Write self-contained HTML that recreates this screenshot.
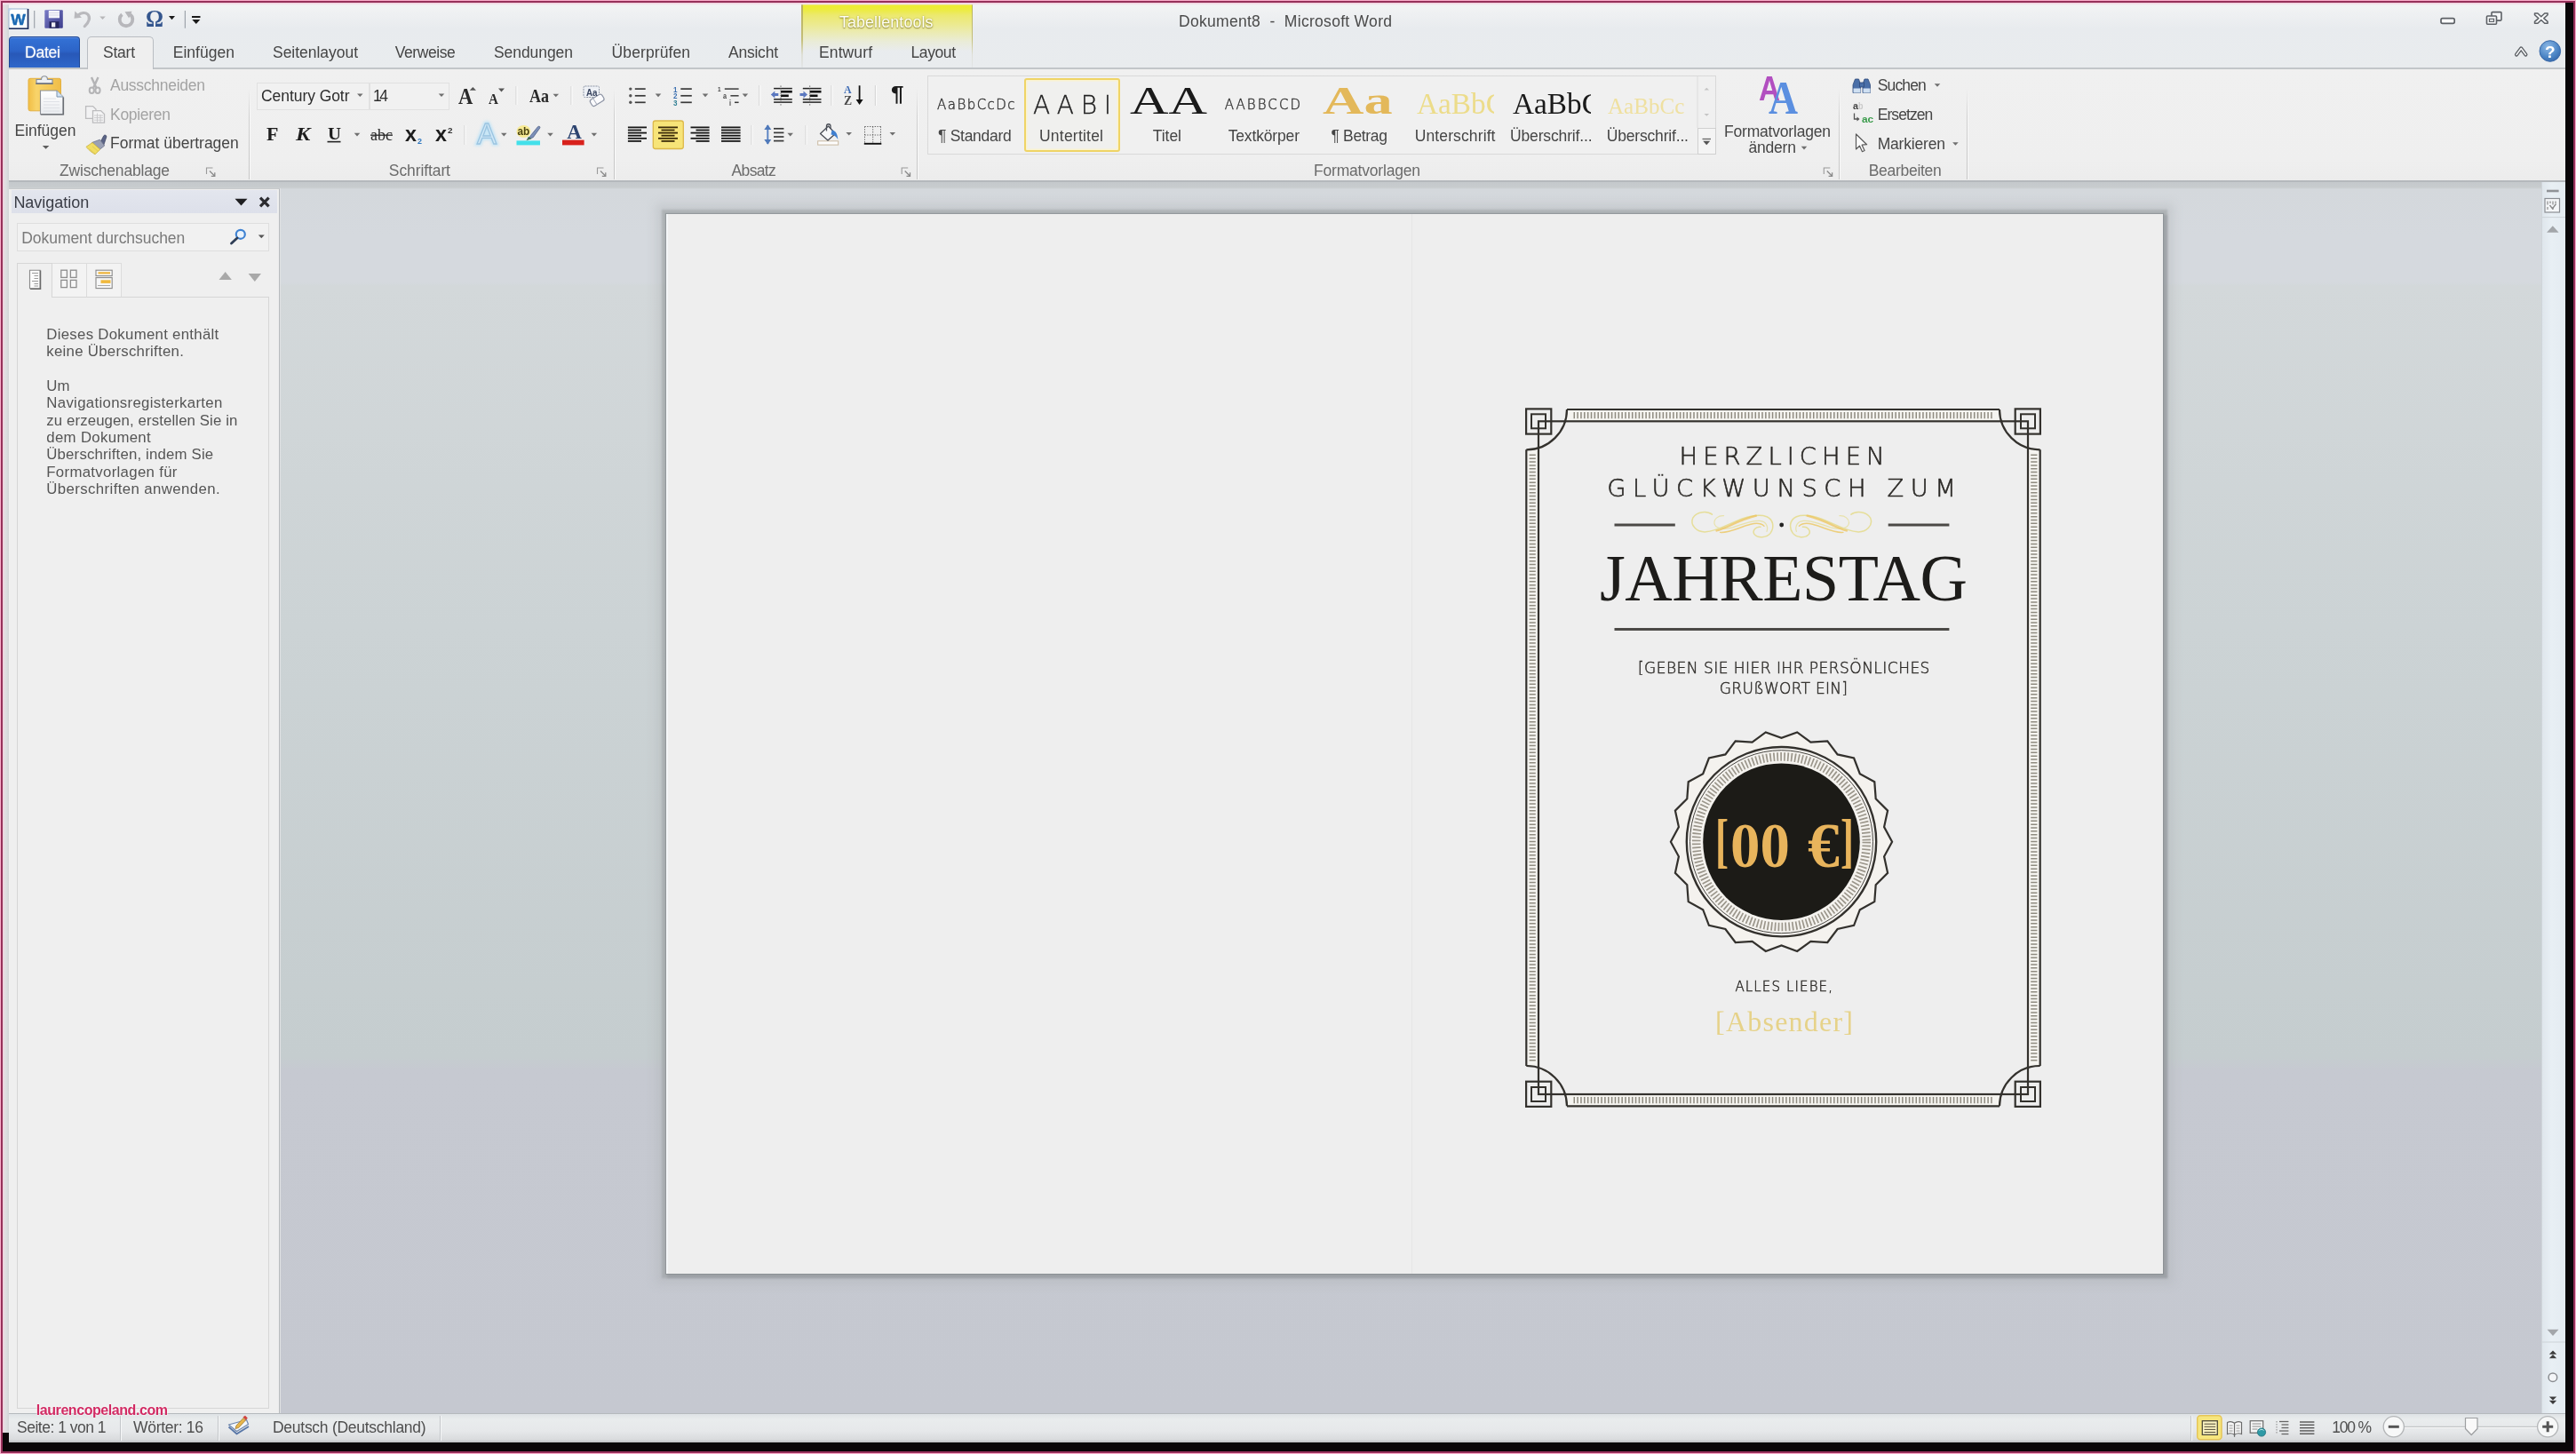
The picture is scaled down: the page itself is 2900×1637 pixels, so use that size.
<!DOCTYPE html>
<html lang="de"><head><meta charset="utf-8"><title>Dokument8 - Microsoft Word</title>
<style>
html,body{margin:0;padding:0;}
body{width:2900px;height:1637px;overflow:hidden;position:relative;background:#f8aecb;font-family:"Liberation Sans",sans-serif;}
div,span.t,svg{position:absolute;box-sizing:border-box;}
span.t{white-space:pre;display:block;}
svg{overflow:visible;}

</style></head><body><div id="app" style="left:0;top:0;width:2900px;height:1637px;will-change:transform;filter:blur(.55px);">
<div style="left:1.2px;top:1.2px;width:2897.4px;height:1634.6px;background:#96305a;"></div>
<div style="left:2.8px;top:2.8px;width:2894.4px;height:1631.4px;background:#0a0608;"></div>
<div style="left:3px;top:3px;width:2885px;height:1621px;background:#e9ecef;"></div>
<div style="left:2.8px;top:2.8px;width:7.2px;height:1621.2px;background:linear-gradient(90deg,#f0c9d8 0,#e6dde2 25%,#dcdee0 55%,#d3d5d7 100%);"></div>
<div style="left:2.8px;top:2.8px;width:2885.2px;height:3.5px;background:linear-gradient(180deg,#f3c4d6 0,#f1e3ea 50%,rgba(243,244,245,0) 100%);z-index:3;"></div>
<div style="left:10px;top:3px;width:2878px;height:74px;background:linear-gradient(180deg,#f3f4f5 0,#e8ebee 40%,#e9ecee 100%);"></div>
<div style="left:902.4px;top:4.7px;width:193px;height:71px;background:linear-gradient(180deg,#ecec40 0,#eeee32 4%,#eceb48 10%,#ece96e 17%,#ecea8e 31%,#ebebb4 45%,rgba(234,236,212,.85) 59%,rgba(233,236,238,0) 74%);"></div>
<div style="left:902.4px;top:4.7px;width:1.3px;height:71px;background:linear-gradient(180deg,#b9b25c 0,#c4be78 55%,rgba(215,215,200,.6) 80%,rgba(220,222,224,.5) 100%);"></div>
<div style="left:1094.2px;top:4.7px;width:1.3px;height:71px;background:linear-gradient(180deg,#b9b25c 0,#c4be78 55%,rgba(215,215,200,.6) 80%,rgba(220,222,224,.5) 100%);"></div>
<span class="t" style="left:945px;top:16.80px;font-family:'Liberation Sans', sans-serif;font-size:17.8px;line-height:17.8px;font-weight:400;color:#fffff6;letter-spacing:0.142px;text-shadow:0 1px 1.5px rgba(110,100,20,.75),0 0 2px rgba(140,130,30,.55);">Tabellentools</span>
<span class="t" style="left:1327px;top:16.00px;font-family:'Liberation Sans', sans-serif;font-size:17.5px;line-height:17.5px;font-weight:400;color:#4a4a4a;letter-spacing:0.292px;">Dokument8  -  Microsoft Word</span>
<div style="left:10px;top:76px;width:2878px;height:1.5px;background:#c2c6c9;"></div>
<div style="left:10px;top:41px;width:80px;height:35px;background:linear-gradient(180deg,#3472d6 0,#2c64c8 45%,#2858b8 55%,#2f68ca 100%);border:1px solid #1d4796;border-bottom:none;border-radius:4px 4px 0 0;box-shadow:inset 0 1px 0 #5d8de0;"></div>
<span class="t" style="left:28px;top:51.00px;font-family:'Liberation Sans', sans-serif;font-size:17.5px;line-height:17.5px;font-weight:400;color:#fff;letter-spacing:-0.215px;text-shadow:0 0 2px rgba(255,255,255,.5);">Datei</span>
<div style="left:98px;top:41px;width:75px;height:37px;background:#efefef;border:1.5px solid #b9bdc2;border-bottom:none;border-radius:5px 5px 0 0;"></div>
<span class="t" style="left:116px;top:51.00px;font-family:'Liberation Sans', sans-serif;font-size:17.5px;line-height:17.5px;font-weight:400;color:#454545;letter-spacing:-0.242px;">Start</span>
<span class="t" style="left:194.7px;top:51.00px;font-family:'Liberation Sans', sans-serif;font-size:17.5px;line-height:17.5px;font-weight:400;color:#454545;letter-spacing:0.029px;">Einfügen</span>
<span class="t" style="left:307px;top:51.00px;font-family:'Liberation Sans', sans-serif;font-size:17.5px;line-height:17.5px;font-weight:400;color:#454545;letter-spacing:-0.030px;">Seitenlayout</span>
<span class="t" style="left:444.8px;top:51.00px;font-family:'Liberation Sans', sans-serif;font-size:17.5px;line-height:17.5px;font-weight:400;color:#454545;letter-spacing:-0.431px;">Verweise</span>
<span class="t" style="left:556px;top:51.00px;font-family:'Liberation Sans', sans-serif;font-size:17.5px;line-height:17.5px;font-weight:400;color:#454545;letter-spacing:-0.068px;">Sendungen</span>
<span class="t" style="left:688.6px;top:51.00px;font-family:'Liberation Sans', sans-serif;font-size:17.5px;line-height:17.5px;font-weight:400;color:#454545;letter-spacing:0.093px;">Überprüfen</span>
<span class="t" style="left:820px;top:51.00px;font-family:'Liberation Sans', sans-serif;font-size:17.5px;line-height:17.5px;font-weight:400;color:#454545;letter-spacing:-0.232px;">Ansicht</span>
<span class="t" style="left:922px;top:51.00px;font-family:'Liberation Sans', sans-serif;font-size:17.5px;line-height:17.5px;font-weight:400;color:#454545;letter-spacing:0.112px;">Entwurf</span>
<span class="t" style="left:1025.5px;top:51.00px;font-family:'Liberation Sans', sans-serif;font-size:17.5px;line-height:17.5px;font-weight:400;color:#454545;letter-spacing:-0.409px;">Layout</span>
<div style="left:10px;top:77.5px;width:2878px;height:127px;background:linear-gradient(180deg,#f0f0f0 0,#efefef 80%,#ececec 100%);"></div>
<div style="left:10px;top:203px;width:2878px;height:2px;background:#b4b8bc;"></div>
<div style="left:280px;top:100px;width:1px;height:102px;background:linear-gradient(180deg,rgba(200,200,200,0) 0,#cfcfcf 30%,#c4c4c4 100%);"></div>
<div style="left:281px;top:100px;width:1px;height:102px;background:linear-gradient(180deg,rgba(255,255,255,0) 0,#fafafa 30%,#fafafa 100%);"></div>
<div style="left:691px;top:100px;width:1px;height:102px;background:linear-gradient(180deg,rgba(200,200,200,0) 0,#cfcfcf 30%,#c4c4c4 100%);"></div>
<div style="left:692px;top:100px;width:1px;height:102px;background:linear-gradient(180deg,rgba(255,255,255,0) 0,#fafafa 30%,#fafafa 100%);"></div>
<div style="left:1032px;top:100px;width:1px;height:102px;background:linear-gradient(180deg,rgba(200,200,200,0) 0,#cfcfcf 30%,#c4c4c4 100%);"></div>
<div style="left:1033px;top:100px;width:1px;height:102px;background:linear-gradient(180deg,rgba(255,255,255,0) 0,#fafafa 30%,#fafafa 100%);"></div>
<div style="left:2070px;top:100px;width:1px;height:102px;background:linear-gradient(180deg,rgba(200,200,200,0) 0,#cfcfcf 30%,#c4c4c4 100%);"></div>
<div style="left:2071px;top:100px;width:1px;height:102px;background:linear-gradient(180deg,rgba(255,255,255,0) 0,#fafafa 30%,#fafafa 100%);"></div>
<div style="left:2213.7px;top:100px;width:1px;height:102px;background:linear-gradient(180deg,rgba(200,200,200,0) 0,#cfcfcf 30%,#c4c4c4 100%);"></div>
<div style="left:2214.7px;top:100px;width:1px;height:102px;background:linear-gradient(180deg,rgba(255,255,255,0) 0,#fafafa 30%,#fafafa 100%);"></div>
<span class="t" style="left:67px;top:184.00px;font-family:'Liberation Sans', sans-serif;font-size:17.5px;line-height:17.5px;font-weight:400;color:#6b6b6b;letter-spacing:-0.190px;">Zwischenablage</span>
<span class="t" style="left:437.8px;top:184.00px;font-family:'Liberation Sans', sans-serif;font-size:17.5px;line-height:17.5px;font-weight:400;color:#6b6b6b;letter-spacing:-0.092px;">Schriftart</span>
<span class="t" style="left:823.6px;top:184.00px;font-family:'Liberation Sans', sans-serif;font-size:17.5px;line-height:17.5px;font-weight:400;color:#6b6b6b;letter-spacing:-0.680px;">Absatz</span>
<span class="t" style="left:1479px;top:184.00px;font-family:'Liberation Sans', sans-serif;font-size:17.5px;line-height:17.5px;font-weight:400;color:#6b6b6b;letter-spacing:-0.197px;">Formatvorlagen</span>
<span class="t" style="left:2103.7px;top:184.00px;font-family:'Liberation Sans', sans-serif;font-size:17.5px;line-height:17.5px;font-weight:400;color:#6b6b6b;letter-spacing:-0.284px;">Bearbeiten</span>
<span class="t" style="left:16.5px;top:139.00px;font-family:'Liberation Sans', sans-serif;font-size:17.5px;line-height:17.5px;font-weight:400;color:#454545;letter-spacing:-0.028px;">Einfügen</span>
<span class="t" style="left:124px;top:88.00px;font-family:'Liberation Sans', sans-serif;font-size:17.5px;line-height:17.5px;font-weight:400;color:#a3a3a3;letter-spacing:-0.268px;">Ausschneiden</span>
<span class="t" style="left:124px;top:121.00px;font-family:'Liberation Sans', sans-serif;font-size:17.5px;line-height:17.5px;font-weight:400;color:#a3a3a3;letter-spacing:-0.295px;">Kopieren</span>
<span class="t" style="left:124px;top:153.00px;font-family:'Liberation Sans', sans-serif;font-size:17.5px;line-height:17.5px;font-weight:400;color:#454545;letter-spacing:-0.009px;">Format übertragen</span>
<div style="left:289px;top:92.5px;width:126.5px;height:31.5px;border:1px solid #e1e1e1;background:#f1f1f1;"></div>
<div style="left:415.5px;top:92.5px;width:90.5px;height:31.5px;border:1px solid #e1e1e1;background:#f1f1f1;"></div>
<span class="t" style="left:294px;top:100.20px;font-family:'Liberation Sans', sans-serif;font-size:17.5px;line-height:17.5px;font-weight:400;color:#2e2e2e;letter-spacing:-0.062px;">Century Gotr</span>
<span class="t" style="left:420px;top:100.20px;font-family:'Liberation Sans', sans-serif;font-size:17.5px;line-height:17.5px;font-weight:400;color:#2e2e2e;letter-spacing:-2.469px;">14</span>
<div style="left:1043.5px;top:85px;width:888px;height:89px;border:1px solid #d9d9d9;background:#f0f0f0;"></div>
<div style="left:1153px;top:87.8px;width:107.6px;height:83px;border:2px solid #efd466;border-radius:3px;background:#f0f0ee;box-shadow:inset 0 0 0 1.5px #faf3cf;"></div>
<span class="t" style="left:1055px;top:110.70px;font-family:'DejaVu Sans Light', 'DejaVu Sans', sans-serif;font-size:15px;line-height:15px;font-weight:200;color:#333;letter-spacing:1.467px;-webkit-text-stroke:.4px #333;">AaBbCcDc</span>
<span class="t" style="left:1056px;top:144.60px;font-family:'Liberation Sans', sans-serif;font-size:17.5px;line-height:17.5px;font-weight:400;color:#454545;letter-spacing:-0.289px;">¶ Standard</span>
<span class="t" style="left:1163px;top:104.50px;font-family:'DejaVu Sans Light', 'DejaVu Sans', sans-serif;font-size:28px;line-height:28px;font-weight:200;color:#222;letter-spacing:-0.602px;-webkit-text-stroke:.35px #222;">A A B I</span>
<span class="t" style="left:1170px;top:144.60px;font-family:'Liberation Sans', sans-serif;font-size:17.5px;line-height:17.5px;font-weight:400;color:#454545;letter-spacing:0.219px;">Untertitel</span>
<span class="t" style="left:1271.6px;top:90.50px;font-family:'Liberation Serif', serif;font-size:45px;line-height:45px;font-weight:400;color:#1a1a1a;transform:scaleX(1.3385);transform-origin:0 0;">AA</span>
<span class="t" style="left:1297.8px;top:144.60px;font-family:'Liberation Sans', sans-serif;font-size:17.5px;line-height:17.5px;font-weight:400;color:#454545;letter-spacing:-0.055px;">Titel</span>
<span class="t" style="left:1378.8px;top:111.00px;font-family:'DejaVu Sans Light', 'DejaVu Sans', sans-serif;font-size:15px;line-height:15px;font-weight:200;color:#333;letter-spacing:2.062px;-webkit-text-stroke:.4px #333;">AABBCCD</span>
<span class="t" style="left:1382.7px;top:144.60px;font-family:'Liberation Sans', sans-serif;font-size:17.5px;line-height:17.5px;font-weight:400;color:#454545;letter-spacing:-0.156px;">Textkörper</span>
<span class="t" style="left:1488.8px;top:90.50px;font-family:'Liberation Serif', serif;font-size:45px;line-height:45px;font-weight:700;color:#e3b85a;transform:scaleX(1.4291);transform-origin:0 0;">Aa</span>
<span class="t" style="left:1498.5px;top:144.60px;font-family:'Liberation Sans', sans-serif;font-size:17.5px;line-height:17.5px;font-weight:400;color:#454545;letter-spacing:-0.333px;">¶ Betrag</span>
<div style="left:1594.6px;top:100.50px;width:87.4px;height:41.25px;overflow:hidden"><span class="t" style="left:0;top:0;font-family:'Liberation Serif', serif;font-size:33px;line-height:33px;font-weight:400;color:#ecdc8a;transform:scaleX(1.0091);transform-origin:0 0;">AaBbC</span></div>
<span class="t" style="left:1592.7px;top:144.60px;font-family:'Liberation Sans', sans-serif;font-size:17.5px;line-height:17.5px;font-weight:400;color:#454545;letter-spacing:0.121px;">Unterschrift</span>
<div style="left:1703px;top:100.50px;width:87.6px;height:41.25px;overflow:hidden"><span class="t" style="left:0;top:0;font-family:'Liberation Serif', serif;font-size:33px;line-height:33px;font-weight:400;color:#1a1a1a;transform:scaleX(1.0091);transform-origin:0 0;">AaBbC</span></div>
<span class="t" style="left:1700px;top:144.60px;font-family:'Liberation Sans', sans-serif;font-size:17.5px;line-height:17.5px;font-weight:400;color:#454545;letter-spacing:-0.144px;">Überschrif...</span>
<span class="t" style="left:1810px;top:106.50px;font-family:'Liberation Serif', serif;font-size:25px;line-height:25px;font-weight:400;color:#efe0a0;transform:scaleX(1.0034);transform-origin:0 0;">AaBbCc</span>
<span class="t" style="left:1808.7px;top:144.60px;font-family:'Liberation Sans', sans-serif;font-size:17.5px;line-height:17.5px;font-weight:400;color:#454545;letter-spacing:-0.169px;">Überschrif...</span>
<div style="left:1911px;top:144px;width:20.5px;height:30px;border:1px solid #d0d0d0;background:#f4f4f4;"></div>
<span class="t" style="left:1941px;top:139.50px;font-family:'Liberation Sans', sans-serif;font-size:17.5px;line-height:17.5px;font-weight:400;color:#454545;letter-spacing:-0.197px;">Formatvorlagen</span>
<span class="t" style="left:1968.4px;top:157.80px;font-family:'Liberation Sans', sans-serif;font-size:17.5px;line-height:17.5px;font-weight:400;color:#454545;letter-spacing:-0.200px;">ändern</span>
<span class="t" style="left:2113.7px;top:87.70px;font-family:'Liberation Sans', sans-serif;font-size:17.5px;line-height:17.5px;font-weight:400;color:#454545;letter-spacing:-0.852px;">Suchen</span>
<span class="t" style="left:2113.7px;top:121.00px;font-family:'Liberation Sans', sans-serif;font-size:17.5px;line-height:17.5px;font-weight:400;color:#454545;letter-spacing:-0.923px;">Ersetzen</span>
<span class="t" style="left:2113.7px;top:153.60px;font-family:'Liberation Sans', sans-serif;font-size:17.5px;line-height:17.5px;font-weight:400;color:#454545;letter-spacing:-0.189px;">Markieren</span>
<div style="left:10px;top:205px;width:2878px;height:1386px;background:linear-gradient(180deg,#c5c9cc 0,#c8ccce 6px,#d4d8dc 8px,#d5d9de 60px,#d5d9de 113px,#d3d8da 117px,#ccd3d5 500px,#c5cdcf 985px,#c6c9d1 1000px,#c5c8d0 100%);"></div>
<div style="left:749.5px;top:240.5px;width:1685px;height:1193.5px;background:#eeeeee;box-shadow:inset 2px 0 0 #f4f6f8,0 0 1px 1px rgba(128,133,136,.55),0 0 2px 5px rgba(150,155,158,.5),3px 3px 2px 2px rgba(140,142,150,.45),0 0 10px 12px rgba(168,173,176,.3);"></div>
<div style="left:1589px;top:240.5px;width:1px;height:1193.5px;background:#e6e6e6;"></div>
<div style="left:10px;top:211.5px;width:305px;height:1380px;background:#efefef;border-right:1.5px solid #b7babd;border-top:1px solid #c8cacc;box-shadow:1px 0 0 #dfe1e3;"></div>
<div style="left:13px;top:214px;width:299px;height:26px;background:linear-gradient(180deg,#e3e6ee 0,#dde0ea 100%);"></div>
<span class="t" style="left:15.4px;top:218.90px;font-family:'Liberation Sans', sans-serif;font-size:18px;line-height:18px;font-weight:400;color:#3a3d46;letter-spacing:-0.018px;">Navigation</span>
<div style="left:19px;top:251px;width:284px;height:31.5px;border:1px solid #dedede;background:#f1f1f1;"></div>
<span class="t" style="left:24.2px;top:259.70px;font-family:'Liberation Sans', sans-serif;font-size:17.5px;line-height:17.5px;font-weight:400;color:#7a7a7a;letter-spacing:-0.038px;">Dokument durchsuchen</span>
<div style="left:19px;top:334px;width:284px;height:1251.5px;border:1px solid #d6d6d6;background:#efefef;"></div>
<div style="left:19px;top:296px;width:40px;height:39px;border:1px solid #d6d6d6;border-bottom:none;background:#efefef;"></div>
<div style="left:59px;top:296px;width:39px;height:38px;border:1px solid #dcdcdc;border-left:none;border-bottom:none;background:#f3f3f3;"></div>
<div style="left:98px;top:296px;width:39px;height:38px;border:1px solid #dcdcdc;border-left:none;border-bottom:none;background:#f3f3f3;"></div>
<span class="t" style="left:52.3px;top:368.60px;font-family:'Liberation Sans', sans-serif;font-size:16.8px;line-height:16.8px;font-weight:400;color:#555;letter-spacing:0.291px;">Dieses Dokument enthält</span>
<span class="t" style="left:52.3px;top:388.00px;font-family:'Liberation Sans', sans-serif;font-size:16.8px;line-height:16.8px;font-weight:400;color:#555;letter-spacing:0.282px;">keine Überschriften.</span>
<span class="t" style="left:52.3px;top:426.80px;font-family:'Liberation Sans', sans-serif;font-size:16.8px;line-height:16.8px;font-weight:400;color:#555;letter-spacing:0.091px;">Um</span>
<span class="t" style="left:52.3px;top:446.20px;font-family:'Liberation Sans', sans-serif;font-size:16.8px;line-height:16.8px;font-weight:400;color:#555;letter-spacing:0.322px;">Navigationsregisterkarten</span>
<span class="t" style="left:52.3px;top:465.60px;font-family:'Liberation Sans', sans-serif;font-size:16.8px;line-height:16.8px;font-weight:400;color:#555;letter-spacing:0.119px;">zu erzeugen, erstellen Sie in</span>
<span class="t" style="left:52.3px;top:485.00px;font-family:'Liberation Sans', sans-serif;font-size:16.8px;line-height:16.8px;font-weight:400;color:#555;letter-spacing:0.328px;">dem Dokument</span>
<span class="t" style="left:52.3px;top:504.40px;font-family:'Liberation Sans', sans-serif;font-size:16.8px;line-height:16.8px;font-weight:400;color:#555;letter-spacing:0.180px;">Überschriften, indem Sie</span>
<span class="t" style="left:52.3px;top:523.80px;font-family:'Liberation Sans', sans-serif;font-size:16.8px;line-height:16.8px;font-weight:400;color:#555;letter-spacing:0.314px;">Formatvorlagen für</span>
<span class="t" style="left:52.3px;top:543.20px;font-family:'Liberation Sans', sans-serif;font-size:16.8px;line-height:16.8px;font-weight:400;color:#555;letter-spacing:0.396px;">Überschriften anwenden.</span>
<div style="left:10px;top:1591px;width:2878px;height:33px;background:linear-gradient(180deg,#dfe3e6 0,#e9eced 20%,#e6e8ea 60%,#d9dbdd 90%,#bfc1c3 100%);border-top:1px solid #b5b9bd;"></div>
<span class="t" style="left:19px;top:1599.00px;font-family:'Liberation Sans', sans-serif;font-size:17.5px;line-height:17.5px;font-weight:400;color:#4f4f4f;letter-spacing:-0.495px;">Seite: 1 von 1</span>
<span class="t" style="left:150px;top:1599.00px;font-family:'Liberation Sans', sans-serif;font-size:17.5px;line-height:17.5px;font-weight:400;color:#4f4f4f;letter-spacing:-0.300px;">Wörter: 16</span>
<span class="t" style="left:307px;top:1599.00px;font-family:'Liberation Sans', sans-serif;font-size:17.5px;line-height:17.5px;font-weight:400;color:#4f4f4f;letter-spacing:-0.270px;">Deutsch (Deutschland)</span>
<span class="t" style="left:2625.3px;top:1599.00px;font-family:'Liberation Sans', sans-serif;font-size:17.5px;line-height:17.5px;font-weight:400;color:#4f4f4f;letter-spacing:-1.231px;">100 %</span>
<div style="left:135px;top:1594px;width:1px;height:28px;background:#c3c6c9;"></div>
<div style="left:136px;top:1594px;width:1px;height:28px;background:#f6f7f8;"></div>
<div style="left:244.6px;top:1594px;width:1px;height:28px;background:#c3c6c9;"></div>
<div style="left:245.6px;top:1594px;width:1px;height:28px;background:#f6f7f8;"></div>
<div style="left:495px;top:1594px;width:1px;height:28px;background:#c3c6c9;"></div>
<div style="left:496px;top:1594px;width:1px;height:28px;background:#f6f7f8;"></div>
<div style="left:2465.8px;top:1594px;width:1px;height:28px;background:#c3c6c9;"></div>
<div style="left:2466.8px;top:1594px;width:1px;height:28px;background:#f6f7f8;"></div>
<div style="left:2861px;top:205px;width:27px;height:1386px;background:linear-gradient(90deg,#dfe6ec 0,#e8eff4 40%,#e4ebf1 100%);border-left:1px solid #cfd5da;"></div>
<svg width="2900" height="1637" viewBox="0 0 2900 1637" style="left:0;top:0"><rect x="1764" y="460.8" width="487" height="13.5" fill="#f5f4f0"/><rect x="1764" y="1232" width="487" height="13.5" fill="#f5f4f0"/><rect x="1718.5" y="506.3" width="13.5" height="693.7" fill="#f5f4f0"/><rect x="2283" y="506.3" width="13.5" height="693.7" fill="#f5f4f0"/><line x1="1771.5" y1="467.7" x2="2245" y2="467.7" stroke="#8f8b80" stroke-width="7.2" stroke-dasharray="1.5 2.35"/><line x1="1771.5" y1="1238.6" x2="2245" y2="1238.6" stroke="#8f8b80" stroke-width="7.2" stroke-dasharray="1.5 2.35"/><line x1="1725.2" y1="511.6" x2="1725.2" y2="1196" stroke="#8f8b80" stroke-width="7.2" stroke-dasharray="1.5 2.35"/><line x1="2289.8" y1="511.6" x2="2289.8" y2="1196" stroke="#8f8b80" stroke-width="7.2" stroke-dasharray="1.5 2.35"/><g fill="none" stroke="#33312d" stroke-width="2.2"><rect x="1732" y="474.3" width="551" height="757.7"/><path d="M1764 461H2251 M1764 1245.3H2251 M1718.3 506.3V1200 M2296.7 506.3V1200"/><path d="M1764 461A45.5 45.5 0 0 1 1718.3 506.3"/><rect x="1718.1" y="460.4" width="28.2" height="28.2"/><rect x="1724" y="466.3" width="16" height="16" stroke-width="2"/><path d="M1764 1245.3A45.5 45.5 0 0 0 1718.3 1200"/><rect x="1718.1" y="1217.7" width="28.2" height="28.2"/><rect x="1724" y="1224" width="16" height="16" stroke-width="2"/><path d="M2251 461A45.5 45.5 0 0 0 2296.7 506.3"/><rect x="2268.7" y="460.4" width="28.2" height="28.2"/><rect x="2275" y="466.3" width="16" height="16" stroke-width="2"/><path d="M2251 1245.3A45.5 45.5 0 0 1 2296.7 1200"/><rect x="2268.7" y="1217.7" width="28.2" height="28.2"/><rect x="2275" y="1224" width="16" height="16" stroke-width="2"/></g><g stroke="#4b4946" stroke-width="3"><path d="M1817.5 591H1885.8M2125.7 591H2194.4M1817.5 708.4H2194.4"/></g><circle cx="2005.7" cy="591" r="2.4" fill="#222"/><g transform="translate(1880 560) scale(0.100929)" fill="none" stroke-linecap="round"><path d="M470 190C420 150 300 150 255 230C220 310 300 390 400 385C520 380 640 300 800 240C900 205 1000 185 1080 215C1150 245 1170 330 1120 400C1080 450 980 460 940 410C915 370 960 320 1010 330" stroke="#e4da84" stroke-width="15" opacity=".8"/><path d="M600 205C540 200 490 240 495 290C505 350 600 360 700 335C800 305 900 255 1000 262C1070 268 1100 320 1080 380" stroke="#e6df9a" stroke-width="12" opacity=".8"/><path d="M560 390C660 400 780 330 900 300C960 285 1020 290 1050 320" stroke="#ecc760" stroke-width="14" opacity=".8"/><path d="M520 372C640 340 760 255 960 205" stroke="#edc35a" stroke-width="22" opacity=".75"/></g><g transform="translate(2131.4 560) scale(-0.100929 0.100929)" fill="none" stroke-linecap="round"><path d="M470 190C420 150 300 150 255 230C220 310 300 390 400 385C520 380 640 300 800 240C900 205 1000 185 1080 215C1150 245 1170 330 1120 400C1080 450 980 460 940 410C915 370 960 320 1010 330" stroke="#e4da84" stroke-width="15" opacity=".8"/><path d="M600 205C540 200 490 240 495 290C505 350 600 360 700 335C800 305 900 255 1000 262C1070 268 1100 320 1080 380" stroke="#e6df9a" stroke-width="12" opacity=".8"/><path d="M560 390C660 400 780 330 900 300C960 285 1020 290 1050 320" stroke="#ecc760" stroke-width="14" opacity=".8"/><path d="M520 372C640 340 760 255 960 205" stroke="#edc35a" stroke-width="22" opacity=".75"/></g><polygon points="2130.1,947.7 2121.1,964.3 2125.1,982.8 2111.7,996.2 2110.3,1015.1 2093.8,1024.2 2087.1,1041.9 2068.6,1046.0 2057.3,1061.0 2038.4,1059.8 2023.2,1071.0 2005.5,1064.5 1987.8,1071.0 1972.6,1059.8 1953.7,1061.0 1942.4,1046.0 1923.9,1041.9 1917.2,1024.2 1900.7,1015.1 1899.3,996.2 1885.9,982.8 1889.9,964.3 1880.9,947.7 1889.9,931.1 1885.9,912.6 1899.3,899.2 1900.7,880.3 1917.2,871.2 1923.9,853.5 1942.4,849.4 1953.7,834.4 1972.6,835.6 1987.8,824.4 2005.5,830.9 2023.2,824.4 2038.4,835.6 2057.3,834.4 2068.6,849.4 2087.1,853.5 2093.8,871.2 2110.3,880.3 2111.7,899.2 2125.1,912.6 2121.1,931.1" fill="#f4f2ee" stroke="#33312d" stroke-width="2.2" stroke-linejoin="miter"/><circle cx="2005.5" cy="947.7" r="106.7" fill="#f4f2ee" stroke="#33312d" stroke-width="2.4"/><circle cx="2005.5" cy="947.7" r="103" fill="none" stroke="#33312d" stroke-width="0.9"/><circle cx="2005.5" cy="947.7" r="95.8" fill="none" stroke="#9b968b" stroke-width="9.6" stroke-dasharray="1.7 2.313"/><circle cx="2005.5" cy="947.7" r="88.3" fill="#1c1b17"/></svg>
<span class="t" style="left:1890.5px;top:500.00px;font-family:'DejaVu Sans Light', 'DejaVu Sans', sans-serif;font-size:27.4px;line-height:27.4px;font-weight:200;color:#2b2926;letter-spacing:6.049px;-webkit-text-stroke:.55px #2b2926;">HERZLICHEN</span>
<span class="t" style="left:1809.3px;top:535.50px;font-family:'DejaVu Sans Light', 'DejaVu Sans', sans-serif;font-size:27.4px;line-height:27.4px;font-weight:200;color:#2b2926;letter-spacing:7.531px;-webkit-text-stroke:.55px #2b2926;">GLÜCKWUNSCH ZUM</span>
<span class="t" style="left:1801px;top:613.70px;font-family:'Liberation Serif', serif;font-size:74px;line-height:74px;font-weight:400;color:#1d1c1a;letter-spacing:-0.445px;">JAHRESTAG</span>
<span class="t" style="left:1844px;top:744.00px;font-family:'DejaVu Sans Light', 'DejaVu Sans', sans-serif;font-size:17px;line-height:17px;font-weight:200;color:#2f2d2a;letter-spacing:0.477px;-webkit-text-stroke:.45px #2f2d2a;">[GEBEN SIE HIER IHR PERSÖNLICHES</span>
<span class="t" style="left:1935.8px;top:767.00px;font-family:'DejaVu Sans Light', 'DejaVu Sans', sans-serif;font-size:17px;line-height:17px;font-weight:200;color:#2f2d2a;letter-spacing:0.301px;-webkit-text-stroke:.45px #2f2d2a;">GRUßWORT EIN]</span>
<span class="t" style="left:1953.4px;top:1104.00px;font-family:'DejaVu Sans Light', 'DejaVu Sans', sans-serif;font-size:15px;line-height:15px;font-weight:200;color:#2f2d2a;letter-spacing:1.138px;-webkit-text-stroke:.45px #2f2d2a;">ALLES LIEBE,</span>
<span class="t" style="left:1931px;top:1134.40px;font-family:'Liberation Serif', serif;font-size:32px;line-height:32px;font-weight:400;color:#e6d289;letter-spacing:1.229px;">[Absender]</span>
<span class="t" style="left:1930.8px;top:911.50px;font-family:'Liberation Serif', serif;font-size:68px;line-height:68px;font-weight:700;color:#e8b45c;transform:scaleX(0.6621);transform-origin:0 0;">[</span>
<span class="t" style="left:2072.4px;top:911.50px;font-family:'Liberation Serif', serif;font-size:68px;line-height:68px;font-weight:700;color:#e8b45c;transform:scaleX(0.6621);transform-origin:0 0;">]</span>
<span class="t" style="left:1947.8px;top:915.50px;font-family:'Liberation Serif', serif;font-size:72.5px;line-height:72.5px;font-weight:700;color:#e8b45c;transform:scaleX(0.9214);transform-origin:0 0;">00</span>
<span class="t" style="left:2034.5px;top:915.50px;font-family:'Liberation Serif', serif;font-size:72.5px;line-height:72.5px;font-weight:700;color:#e8b45c;transform:scaleX(0.9903);transform-origin:0 0;">€</span>
<svg width="2900" height="1637" viewBox="0 0 2900 1637" style="left:0;top:0"><rect x="10" y="10" width="21" height="22" fill="#fdfefe" stroke="#9fb6d2" stroke-width="1"/><path d="M10 32.3H31.6V10" fill="none" stroke="#1f2f5c" stroke-width="1.6"/><path d="M9.5 9.5l4 0l-4 4z" fill="#bcd4ec"/><text x="20.6" y="28.2" font-family="'Liberation Sans',sans-serif" font-weight="700" font-size="16.5" text-anchor="middle" fill="#1b69b3" stroke="#1b69b3" stroke-width=".5" textLength="16.5" lengthAdjust="spacingAndGlyphs">W</text><path d="M38.7 12V31.7" stroke="#9ea4ab" stroke-width="1.2"/><path d="M208.4 12V31.7" stroke="#9ea4ab" stroke-width="1.2"/><defs><linearGradient id="sv" x1="0" y1="0" x2="1" y2="1"><stop offset="0" stop-color="#7a7cc6"/><stop offset="1" stop-color="#3c3d8c"/></linearGradient></defs><rect x="50.3" y="11.2" width="20.5" height="20.5" rx="1" fill="url(#sv)"/><rect x="54.8" y="12" width="12.2" height="8.3" fill="#f4f4fa"/><path d="M54.8 14.5h12.2M54.8 17h12.2" stroke="#d5d5e6" stroke-width=".8"/><rect x="55.5" y="24.2" width="11" height="7.5" fill="#23245c"/><rect x="58" y="25.3" width="4.3" height="5.2" fill="#eeeef6"/><path d="M95.3 29.6C100.500 25 102 19.500 98.800 16.200C96 13.500 91.500 14.200 88 17" fill="none" stroke="#b9b9bd" stroke-width="3.200" stroke-linecap="round"/><path d="M83.500 20.800L84.300 12.600L92 19.800Z" fill="#b9b9bd"/><path d="M112.2 18.55h6.6l-3.3 3.5z" fill="#b7b7b9"/><path d="M146.600 16.300A7.300 7.300 0 1 1 137.400 16.300" fill="none" stroke="#b7b7bb" stroke-width="3.800"/><path d="M140.500 13.200L148.500 12.800L145.200 20.600Z" fill="#b7b7bb"/><path d="M190 18.1h7l-3.5 4.2z" fill="#1a1a1a"/><path d="M216 19H225.5" stroke="#1a1a1a" stroke-width="2"/><path d="M216.3 22.1h9l-4.5 5z" fill="#1a1a1a"/><rect x="2748" y="20.6" width="15.2" height="5.8" rx="1.8" fill="#fafbfc" stroke="#5d6166" stroke-width="1.7"/><g fill="#f6f7f8" stroke="#5d6166" stroke-width="1.6"><rect x="2805" y="13.6" width="11" height="9.5" rx="1"/><rect x="2799.5" y="18" width="11" height="9.2" rx="1"/><rect x="2802.5" y="21.3" width="5" height="3" stroke-width="1.2"/></g><path d="M2853.5 15l3.4 0l3.9 3.7l3.9-3.7l3.4 0l0 1.8l-4.3 3.8l4.3 3.8l0 1.8l-3.4 0l-3.9-3.7l-3.9 3.7l-3.4 0l0-1.8l4.3-3.8l-4.3-3.8z" fill="#f8f9fa" stroke="#5d6166" stroke-width="1.5" stroke-linejoin="round"/><path d="M2833 61.5l5.2-7l5.2 7" fill="none" stroke="#5a5e63" stroke-width="4.2" stroke-linejoin="round" stroke-linecap="round"/><path d="M2833 61.5l5.2-7l5.2 7" fill="none" stroke="#f4f5f6" stroke-width="1.6" stroke-linejoin="round" stroke-linecap="round"/><defs><radialGradient id="hp" cx=".4" cy=".3" r=".8"><stop offset="0" stop-color="#8db9e6"/><stop offset=".6" stop-color="#4d86c6"/><stop offset="1" stop-color="#2f62a6"/></radialGradient></defs><circle cx="2870.8" cy="57.5" r="11.8" fill="url(#hp)" stroke="#3a69a8" stroke-width="1"/><text x="2870.8" y="64.5" font-family="'Liberation Sans',sans-serif" font-weight="700" font-size="19" text-anchor="middle" fill="#fff">?</text></svg>
<span class="t" style="left:164px;top:8.30px;font-family:'Liberation Serif', serif;font-size:26.5px;line-height:26.5px;font-weight:700;color:#34568e;transform:scaleX(0.9419);transform-origin:0 0;">Ω</span>
<svg width="2900" height="1637" viewBox="0 0 2900 1637" style="left:0;top:0"><defs><linearGradient id="cb" x1="0" y1="0" x2="1" y2="0"><stop offset="0" stop-color="#f1be45"/><stop offset=".25" stop-color="#f8d46a"/><stop offset="1" stop-color="#f0bd48"/></linearGradient><linearGradient id="pp" x1="0" y1="0" x2="0" y2="1"><stop offset="0" stop-color="#ffffff"/><stop offset="1" stop-color="#e9ebef"/></linearGradient></defs><rect x="32" y="88.3" width="36.5" height="36.5" rx="2" fill="url(#cb)" stroke="#e3b041" stroke-width="1"/><path d="M41 94v-4.5h5.5c0-5 7-5 7 0H59V94z" fill="#eceff2" stroke="#8b9098" stroke-width="1.2"/><path d="M40.3 94.2H59.6" stroke="#6d7279" stroke-width="1.6"/><path d="M45.5 102h18.5l7 7v19.6h-25.5z" fill="url(#pp)" stroke="#8e9197" stroke-width="1.1"/><path d="M46 128.9H71.4V109.5" fill="none" stroke="#6b6e74" stroke-width="1.4"/><path d="M64 102v7h7" fill="#cfe2f3" stroke="#7d93ad" stroke-width="1"/><path d="M49 111h14M49 114.5h18M49 118h18M49 121.5h18M49 125h18" stroke="#dcdfe4" stroke-width=".9"/><path d="M47.8 164h7.6l-3.8 3.8z" fill="#5e5e5e"/><g fill="none" stroke="#b3b3b5" stroke-width="2"><path d="M103 87l5.2 11.5M110.5 87l-5.2 11.5" stroke-width="2.4"/><ellipse cx="103.3" cy="101.8" rx="2.6" ry="3.2"/><ellipse cx="110" cy="101.8" rx="2.6" ry="3.2"/></g><g fill="#f2f2f3" stroke="#bcbcbe" stroke-width="1.3"><path d="M96.6 119.6h8l3.4 3.4v10.4h-11.4z"/><path d="M104.5 124.6h9l4 4v9.6h-13z" fill="#f4f4f5"/><path d="M106 130h10M106 132.6h10M106 135.2h10M109.5 127.5v10M113 129v9" stroke-width=".9" stroke="#c6c6c8"/></g><path d="M112 162l4.8-9.2c.9-1.5 3.6-.4 3 1.4L116.5 164z" fill="#5b6486" stroke="#424a68" stroke-width=".8"/><path d="M103.5 160.5l9-3.3l5.2 6.8l-5 4z" fill="#9aa0b4" stroke="#6d738a" stroke-width=".8"/><path d="M97 165.3l7-4.8l8.8 7.8l-5.8 5.5c-3.2-1.8-7-4.6-10-8.500z" fill="#f1dd63" stroke="#c9b243" stroke-width=".8"/><path d="M100.5 167.8l6.6 5.4M104 164.8l6.200 5.4" stroke="#d9c450" stroke-width=".8"/></svg>
<svg width="2900" height="1637" viewBox="0 0 2900 1637" style="left:0;top:0"><path d="M402 105.5h6.6l-3.3 3.6z" fill="#6f6f6f"/><path d="M493.7 105.5h6.6l-3.3 3.6z" fill="#6f6f6f"/><path d="M528.7 101.8h7.3l-3.65-3.7z" fill="#555"/><path d="M561 99.6h7l-3.5 4z" fill="#555"/><path d="M581 97V118" stroke="#d8d8d8" stroke-width="1.2"/><path d="M582.1 97V118" stroke="#fbfbfb" stroke-width="1"/><path d="M643 97V118" stroke="#d8d8d8" stroke-width="1.2"/><path d="M644.1 97V118" stroke="#fbfbfb" stroke-width="1"/><path d="M523 141V163" stroke="#d8d8d8" stroke-width="1.2"/><path d="M524.1 141V163" stroke="#fbfbfb" stroke-width="1"/><path d="M622.5 105.7h6.6l-3.3 3.6z" fill="#6f6f6f"/><rect x="657" y="97" width="17.5" height="12.5" rx="1.5" fill="#eef1f6" stroke="#8b93a3" stroke-width="1" stroke-dasharray="2 1"/><g transform="rotate(-32 672 113)"><rect x="664.5" y="108.8" width="15.5" height="8.2" rx="2.5" fill="#fbfbfd" stroke="#8d94a4" stroke-width="1.2"/><path d="M669.500 108.8v8.200" stroke="#aab0bd" stroke-width="1"/></g><path d="M398.7 149.8h6.6l-3.3 3.6z" fill="#6f6f6f"/><path d="M564 149.8h6.6l-3.3 3.6z" fill="#6f6f6f"/><path d="M616.2 149.8h6.6l-3.3 3.6z" fill="#6f6f6f"/><path d="M665.5 149.8h6.6l-3.3 3.6z" fill="#6f6f6f"/><path d="M368.5 159.6H383.5" stroke="#222" stroke-width="1.6"/><path d="M417 152.2H442" stroke="#333" stroke-width="1.4"/><defs><filter id="gl" x="-30%" y="-30%" width="160%" height="160%"><feGaussianBlur stdDeviation="1.6"/></filter></defs><text x="548" y="162" font-family="'Liberation Sans',sans-serif" font-size="33" text-anchor="middle" fill="#bfe3f6" stroke="#bfe3f6" stroke-width="4" filter="url(#gl)">A</text><text x="548" y="162" font-family="'Liberation Sans',sans-serif" font-size="33" text-anchor="middle" fill="#cfe8f7" stroke="#9cc4e0" stroke-width="1.3">A</text><rect x="581.5" y="158.4" width="26.5" height="5" fill="#43e0ea"/><ellipse cx="589.5" cy="148" rx="8" ry="7" fill="#f7e98a" opacity=".9"/><text x="582.5" y="151.5" font-family="'Liberation Sans',sans-serif" font-size="13.5" font-weight="700" fill="#4a4310" textLength="13.8" lengthAdjust="spacingAndGlyphs">ab</text><path d="M595 156.500l2.500-4l8-9.800c1.800-1.300 3 .3 2.200 1.500l-7.500 10.500z" fill="#7b8fb8" stroke="#4f5f85" stroke-width=".8"/><path d="M592.500 158.200l2.500-4.500l3.500 2.600z" fill="#3f6f5a"/><rect x="633" y="157.600" width="24.600" height="5.800" fill="#d8211c"/><text x="646.500" y="155.600" font-family="'Liberation Serif',serif" font-size="23" font-weight="700" text-anchor="middle" fill="#2d4470">A</text><g transform="translate(232 188.500)" fill="none" stroke="#9a9a9a" stroke-width="1.1"><path d="M.5 7.500V.5H7.500"/><path d="M4 4l5.500 5.500M9.800 5.800v4h-4" stroke="#8a8a8a" stroke-width="1.300"/></g><g transform="translate(672 188.500)" fill="none" stroke="#9a9a9a" stroke-width="1.1"><path d="M.5 7.500V.5H7.500"/><path d="M4 4l5.500 5.500M9.800 5.800v4h-4" stroke="#8a8a8a" stroke-width="1.300"/></g><g transform="translate(1014.7 188.500)" fill="none" stroke="#9a9a9a" stroke-width="1.1"><path d="M.5 7.500V.5H7.500"/><path d="M4 4l5.500 5.500M9.800 5.800v4h-4" stroke="#8a8a8a" stroke-width="1.300"/></g><g transform="translate(2052.8 188.500)" fill="none" stroke="#9a9a9a" stroke-width="1.1"><path d="M.5 7.500V.5H7.500"/><path d="M4 4l5.500 5.500M9.800 5.800v4h-4" stroke="#8a8a8a" stroke-width="1.300"/></g></svg>
<span class="t" style="left:515.5px;top:97.20px;font-family:'Liberation Serif', serif;font-size:24.5px;line-height:24.5px;font-weight:700;color:#2a2a2a;transform:scaleX(0.9207);transform-origin:0 0;">A</span>
<span class="t" style="left:549.7px;top:103.20px;font-family:'Liberation Serif', serif;font-size:17px;line-height:17px;font-weight:700;color:#2a2a2a;transform:scaleX(0.8875);transform-origin:0 0;">A</span>
<span class="t" style="left:595.5px;top:98.30px;font-family:'Liberation Serif', serif;font-size:21.5px;line-height:21.5px;font-weight:700;color:#2a2a2a;transform:scaleX(0.8409);transform-origin:0 0;">Aa</span>
<span class="t" style="left:659.5px;top:98.50px;font-family:'Liberation Sans', sans-serif;font-size:10.5px;line-height:10.5px;font-weight:700;color:#3a4560;transform:scaleX(0.9302);transform-origin:0 0;">Aa</span>
<span class="t" style="left:300px;top:141.30px;font-family:'Liberation Serif', serif;font-size:21px;line-height:21px;font-weight:700;color:#1d1d1d;transform:scaleX(1.0446);transform-origin:0 0;">F</span>
<span class="t" style="left:332.6px;top:141.30px;font-family:'Liberation Serif', serif;font-size:21px;line-height:21px;font-weight:700;font-style:italic;color:#1d1d1d;transform:scaleX(1.1701);transform-origin:0 0;">K</span>
<span class="t" style="left:368.5px;top:141.30px;font-family:'Liberation Serif', serif;font-size:19.5px;line-height:19.5px;font-weight:700;color:#1d1d1d;transform:scaleX(1.0643);transform-origin:0 0;">U</span>
<span class="t" style="left:417px;top:143.00px;font-family:'Liberation Serif', serif;font-size:18.5px;line-height:18.5px;font-weight:400;color:#2a2a2a;transform:scaleX(0.9732);transform-origin:0 0;">abc</span>
<span class="t" style="left:456px;top:139.50px;font-family:'Liberation Sans', sans-serif;font-size:23px;line-height:23px;font-weight:700;color:#1d1d1d;transform:scaleX(1.0159);transform-origin:0 0;">x</span>
<span class="t" style="left:469.5px;top:154.50px;font-family:'Liberation Sans', sans-serif;font-size:9px;line-height:9px;font-weight:700;color:#2f78c0;transform:scaleX(0.9969);transform-origin:0 0;">2</span>
<span class="t" style="left:490px;top:139.50px;font-family:'Liberation Sans', sans-serif;font-size:23px;line-height:23px;font-weight:700;color:#1d1d1d;transform:scaleX(1.0159);transform-origin:0 0;">x</span>
<span class="t" style="left:504px;top:142.50px;font-family:'Liberation Sans', sans-serif;font-size:9px;line-height:9px;font-weight:700;color:#333;transform:scaleX(1.0966);transform-origin:0 0;">2</span>
<svg width="2900" height="1637" viewBox="0 0 2900 1637" style="left:0;top:0"><circle cx="709.800" cy="100.1" r="1.700" fill="#555"/><path d="M714.8 100.1H726.7" stroke="#3a3a3a" stroke-width="1.7"/><circle cx="709.800" cy="107.8" r="1.700" fill="#555"/><path d="M714.8 107.8H726.7" stroke="#3a3a3a" stroke-width="1.7"/><circle cx="709.800" cy="115.3" r="1.700" fill="#555"/><path d="M714.8 115.3H726.7" stroke="#3a3a3a" stroke-width="1.7"/><path d="M737.7 105.6h6.6l-3.3 3.6z" fill="#6f6f6f"/><path d="M766.3 100.1H778.8" stroke="#3a3a3a" stroke-width="1.7"/><path d="M766.3 107.8H778.8" stroke="#3a3a3a" stroke-width="1.7"/><path d="M766.3 115.3H778.8" stroke="#3a3a3a" stroke-width="1.7"/><path d="M790.7 105.6h6.6l-3.3 3.6z" fill="#6f6f6f"/><path d="M815.8 100.1H831.6" stroke="#3a3a3a" stroke-width="1.5"/><path d="M822.4 107.8H831.6" stroke="#3a3a3a" stroke-width="1.5"/><path d="M827 115.3H831.6" stroke="#3a3a3a" stroke-width="1.5"/><path d="M835.6 105.6h6.6l-3.3 3.6z" fill="#6f6f6f"/><path d="M854.7 96V119" stroke="#d8d8d8" stroke-width="1.2"/><path d="M855.8 96V119" stroke="#fbfbfb" stroke-width="1"/><path d="M936 96V119" stroke="#d8d8d8" stroke-width="1.2"/><path d="M937.1 96V119" stroke="#fbfbfb" stroke-width="1"/><path d="M985.4 96V119" stroke="#d8d8d8" stroke-width="1.2"/><path d="M986.5 96V119" stroke="#fbfbfb" stroke-width="1"/><path d="M846 141V163" stroke="#d8d8d8" stroke-width="1.2"/><path d="M847.1 141V163" stroke="#fbfbfb" stroke-width="1"/><path d="M907 141V163" stroke="#d8d8d8" stroke-width="1.2"/><path d="M908.1 141V163" stroke="#fbfbfb" stroke-width="1"/><path d="M871.1 99.6H891.8" stroke="#222" stroke-width="1.5"/><path d="M879 103.2H891.8" stroke="#111" stroke-width="2.6"/><path d="M879 107.8H887.8" stroke="#111" stroke-width="2.6"/><path d="M871.1 111.8H891.8" stroke="#222" stroke-width="1.5"/><path d="M871.1 115.1H891.8" stroke="#222" stroke-width="1.5"/><path d="M879 96.500V118.500" stroke="#555" stroke-width="1" stroke-dasharray="1.300 1.300"/><path d="M867.8 106.500l4.500-4v2.600h4v2.800h-4v2.600z" fill="#5b78c0"/><path d="M903.8 99.6H924.5" stroke="#222" stroke-width="1.5"/><path d="M911.7 103.2H924.5" stroke="#111" stroke-width="2.6"/><path d="M911.7 107.8H920.5" stroke="#111" stroke-width="2.6"/><path d="M903.8 111.8H924.5" stroke="#222" stroke-width="1.5"/><path d="M903.8 115.1H924.5" stroke="#222" stroke-width="1.5"/><path d="M911.7 96.500V118.500" stroke="#555" stroke-width="1" stroke-dasharray="1.300 1.300"/><path d="M909 106.500l-4.500-4v2.600h-4v2.800h4v2.600z" fill="#5b78c0"/><path d="M967.600 96.300V116" stroke="#111" stroke-width="1.800"/><path d="M963.600 112l4 6l4-6z" fill="#111"/><path d="M706.9 143.4H728" stroke="#161616" stroke-width="1.8"/><path d="M706.9 146.5H722" stroke="#161616" stroke-width="1.8"/><path d="M706.9 149.6H728" stroke="#161616" stroke-width="1.8"/><path d="M706.9 152.7H722" stroke="#161616" stroke-width="1.8"/><path d="M706.9 155.8H728" stroke="#161616" stroke-width="1.8"/><path d="M706.9 158.9H722" stroke="#161616" stroke-width="1.8"/><rect x="735.300" y="136" width="34" height="31.500" rx="2.500" fill="#f7e478" stroke="#dcb84a" stroke-width="1.300"/><path d="M741 143.4H763" stroke="#3a2a08" stroke-width="1.8"/><path d="M744.5 146.5H759.5" stroke="#3a2a08" stroke-width="1.8"/><path d="M741 149.6H763" stroke="#3a2a08" stroke-width="1.8"/><path d="M744.5 152.7H759.5" stroke="#3a2a08" stroke-width="1.8"/><path d="M741 155.8H763" stroke="#3a2a08" stroke-width="1.8"/><path d="M744.5 158.9H759.5" stroke="#3a2a08" stroke-width="1.8"/><path d="M777.5 143.4H798.6" stroke="#161616" stroke-width="1.8"/><path d="M783.5 146.5H798.6" stroke="#161616" stroke-width="1.8"/><path d="M777.5 149.6H798.6" stroke="#161616" stroke-width="1.8"/><path d="M783.5 152.7H798.6" stroke="#161616" stroke-width="1.8"/><path d="M777.5 155.8H798.6" stroke="#161616" stroke-width="1.8"/><path d="M783.5 158.9H798.6" stroke="#161616" stroke-width="1.8"/><path d="M812 143.4H833.6" stroke="#161616" stroke-width="1.8"/><path d="M812 146.5H833.6" stroke="#161616" stroke-width="1.8"/><path d="M812 149.6H833.6" stroke="#161616" stroke-width="1.8"/><path d="M812 152.7H833.6" stroke="#161616" stroke-width="1.8"/><path d="M812 155.8H833.6" stroke="#161616" stroke-width="1.8"/><path d="M812 158.9H833.6" stroke="#161616" stroke-width="1.8"/><path d="M864.300 141V162" stroke="#5e86c4" stroke-width="2"/><path d="M860.300 146l4-5.800l4 5.800zM860.300 157l4 5.800l4-5.800z" fill="#4f79ba"/><path d="M871 144.8H882.4" stroke="#3a3a3a" stroke-width="1.7"/><path d="M871 149.4H882.4" stroke="#3a3a3a" stroke-width="1.7"/><path d="M871 154H882.4" stroke="#3a3a3a" stroke-width="1.7"/><path d="M871 158.6H882.4" stroke="#3a3a3a" stroke-width="1.7"/><path d="M886.4 149.8h6.6l-3.3 3.6z" fill="#6f6f6f"/><rect x="920.700" y="158.800" width="23" height="4.300" fill="#fdfdfd" stroke="#c9b9a0" stroke-width="1"/><path d="M923.500 150.500l9-8.500l8 8.500l-8.500 7.500z" fill="#f6f7f9" stroke="#4a4e57" stroke-width="1.300" stroke-linejoin="round"/><path d="M930.500 147.500v-5.500c0-3 4.500-3 4.500 0v3" fill="none" stroke="#4a4e57" stroke-width="1.300"/><path d="M936.500 146.500c4 .5 6.500 4 6.800 10.500c-2-3.500-4-5-7.800-5.500z" fill="#3f7fd0"/><path d="M952.4 148.9h6.6l-3.3 3.6z" fill="#6f6f6f"/><g stroke="#555" stroke-width="1" stroke-dasharray="1.200 1.600"><path d="M973.500 142.500H992M973.500 152H992M973.500 142.500V161M982.700 142.500V161M991.500 142.500V161"/></g><path d="M972.800 161.800H992.300" stroke="#111" stroke-width="1.900"/><path d="M1001.5 148.9h6.6l-3.3 3.6z" fill="#6f6f6f"/><path d="M1918.500 101.500l2.800-2.800l2.800 2.800z" fill="#c4c4c4"/><path d="M1918.500 128l2.800 2.800l2.800-2.800z" fill="#c4c4c4"/><path d="M1916.500 156.500h9.500" stroke="#666" stroke-width="1.300"/><path d="M1917.2 158.8h8l-4 4.4z" fill="#555"/><path d="M1911 85.500V144" stroke="#dcdcdc" stroke-width="1"/><path d="M2027.7 164.8h6.6l-3.3 3.6z" fill="#6f6f6f"/><path d="M2177.7 94.2h6.6l-3.3 3.6z" fill="#6f6f6f"/><path d="M2198.1 160.2h6.6l-3.3 3.6z" fill="#6f6f6f"/><g fill="#4a6fa8" stroke="#2f4a7a" stroke-width=".8"><path d="M2086 104.500v-9l2.500-6.500h4l2 6v9.500z"/><path d="M2097 104.500v-9.500l2-6h4l2.500 6.500v9z"/><rect x="2093.500" y="93" width="5" height="5"/></g><rect x="2086.500" y="99.500" width="8" height="5" fill="#cfe0f2"/><rect x="2097.500" y="99.500" width="8" height="5" fill="#cfe0f2"/><path d="M2089.500 151v17l4-3.800l3 6.500l2.600-1.200l-3-6.300l5.500-.5z" fill="#fafafa" stroke="#5a5a5a" stroke-width="1.200" stroke-linejoin="round"/><path d="M2087.500 127.500v6.500h3.500" fill="none" stroke="#555" stroke-width="1.300"/><path d="M2090.500 131.500l3 2.500l-3 2.500z" fill="#555"/></svg>
<span class="t" style="left:758px;top:95.50px;font-family:'Liberation Sans', sans-serif;font-size:9.5px;line-height:9.5px;font-weight:700;color:#3b6fb0;transform:scaleX(0.8496);transform-origin:0 0;">1</span>
<span class="t" style="left:758px;top:103.20px;font-family:'Liberation Sans', sans-serif;font-size:9.5px;line-height:9.5px;font-weight:700;color:#3b6fb0;transform:scaleX(0.8496);transform-origin:0 0;">2</span>
<span class="t" style="left:758px;top:110.80px;font-family:'Liberation Sans', sans-serif;font-size:9.5px;line-height:9.5px;font-weight:700;color:#2f7f93;transform:scaleX(0.8496);transform-origin:0 0;">3</span>
<span class="t" style="left:808px;top:97.00px;font-family:'Liberation Sans', sans-serif;font-size:8px;line-height:8px;font-weight:700;color:#444;transform:scaleX(0.7860);transform-origin:0 0;">1</span>
<span class="t" style="left:813.8px;top:103.60px;font-family:'Liberation Sans', sans-serif;font-size:8.5px;line-height:8.5px;font-weight:700;color:#444;transform:scaleX(0.8449);transform-origin:0 0;">a</span>
<span class="t" style="left:820.8px;top:111.80px;font-family:'Liberation Sans', sans-serif;font-size:8.5px;line-height:8.5px;font-weight:700;color:#444;transform:scaleX(0.8421);transform-origin:0 0;">i</span>
<span class="t" style="left:949.7px;top:95.00px;font-family:'Liberation Serif', serif;font-size:12.5px;line-height:12.5px;font-weight:700;color:#3f6db5;transform:scaleX(0.9522);transform-origin:0 0;">A</span>
<span class="t" style="left:949.7px;top:106.40px;font-family:'Liberation Serif', serif;font-size:14.5px;line-height:14.5px;font-weight:700;color:#4a4a4a;transform:scaleX(0.9409);transform-origin:0 0;">Z</span>
<span class="t" style="left:1002.5px;top:93.80px;font-family:'Liberation Sans', sans-serif;font-size:24.5px;line-height:24.5px;font-weight:700;color:#1b1b1b;transform:scaleX(1.0630);transform-origin:0 0;">¶</span>
<span class="t" style="left:2085.5px;top:113.80px;font-family:'Liberation Sans', sans-serif;font-size:10.5px;line-height:10.5px;font-weight:700;color:#444;transform:scaleX(1.0267);transform-origin:0 0;">a</span>
<span class="t" style="left:2092px;top:113.80px;font-family:'Liberation Sans', sans-serif;font-size:10.5px;line-height:10.5px;font-weight:700;color:#c9c9c9;transform:scaleX(0.8564);transform-origin:0 0;">b</span>
<span class="t" style="left:2095.5px;top:129.20px;font-family:'Liberation Sans', sans-serif;font-size:11.5px;line-height:11.5px;font-weight:700;color:#3b9c4c;transform:scaleX(1.0315);transform-origin:0 0;">ac</span>
<span class="t" style="left:1980px;top:81.00px;font-family:'Liberation Sans', sans-serif;font-size:38px;line-height:38px;font-weight:700;color:#b24fc0;transform:scaleX(0.8742);transform-origin:0 0;">A</span>
<span class="t" style="left:1990.5px;top:84.60px;font-family:'Liberation Serif', serif;font-size:52px;line-height:52px;font-weight:700;color:#5b8fe0;transform:scaleX(0.8785);transform-origin:0 0;">A</span>
<svg width="2900" height="1637" viewBox="0 0 2900 1637" style="left:0;top:0"><path d="M264.500 223.700h14l-7 7.800z" fill="#1f1f22"/><path d="M293 222.600l9.600 9.800M302.600 222.600l-9.600 9.800" stroke="#2c2c30" stroke-width="3.200" stroke-linecap="butt"/><circle cx="270.800" cy="263.800" r="5" fill="#eaf3fc" stroke="#3f82d2" stroke-width="2.200"/><path d="M267 268l-6.500 6" stroke="#2e3d55" stroke-width="2.800" stroke-linecap="round"/><path d="M290.8 264.4h7l-3.5 3.8z" fill="#555"/><path d="M33.500 304.200h11.500v20.500h-11.500z" fill="#fbfbfb" stroke="#8a8a8a" stroke-width="1.100"/><path d="M45.600 304.500v20.800h-11.500" fill="none" stroke="#6a6a6a" stroke-width="1.300"/><path d="M36 307.5H43" stroke="#9a9a9a" stroke-width="1"/><path d="M38.5 310.5H43" stroke="#9a9a9a" stroke-width="1"/><path d="M38.5 313.5H43" stroke="#9a9a9a" stroke-width="1"/><path d="M36 316.5H43" stroke="#9a9a9a" stroke-width="1"/><path d="M38.5 319.5H43" stroke="#9a9a9a" stroke-width="1"/><path d="M38.5 322H43" stroke="#9a9a9a" stroke-width="1"/><rect x="68.8" y="304.2" width="6.600" height="8.200" fill="#f7f7f7" stroke="#8e8e8e" stroke-width="1.300"/><rect x="79.4" y="304.2" width="6.600" height="8.200" fill="#f7f7f7" stroke="#8e8e8e" stroke-width="1.300"/><rect x="68.8" y="315.4" width="6.600" height="8.200" fill="#f7f7f7" stroke="#8e8e8e" stroke-width="1.300"/><rect x="79.4" y="315.4" width="6.600" height="8.200" fill="#f7f7f7" stroke="#8e8e8e" stroke-width="1.300"/><rect x="108" y="304.200" width="18.200" height="6.400" fill="#f7f7f7" stroke="#8a8a8a" stroke-width="1.100"/><rect x="110.500" y="306.200" width="13.500" height="2.300" fill="#eeb640"/><rect x="108" y="312.600" width="18.200" height="12" fill="#f7f7f7" stroke="#8a8a8a" stroke-width="1.100"/><rect x="113.500" y="315.300" width="11" height="3.600" fill="#f0b93e"/><path d="M110 321.500h14" stroke="#aaa" stroke-width="1"/><path d="M246.500 315h14.400l-7.200-9z" fill="#a9a9a9"/><path d="M279.600 308h14.400l-7.200 9z" fill="#a9a9a9"/><path d="M257.500 1604l9 7.500l13-8l-2-5l-9 2.500z" fill="#f2f6fb" stroke="#6f87ad" stroke-width="1.200" stroke-linejoin="round"/><path d="M257.500 1606.500l9 7.800l13.500-8.300" fill="none" stroke="#5a78a8" stroke-width="1.800"/><path d="M266 1605l8-8.500l2.500 2.500l-8 8.500l-3.500 1z" fill="#e7b64c" stroke="#a5782a" stroke-width=".8"/><path d="M273.500 1595.500l2.500-1.800l2.800 2.800l-1.900 2.300z" fill="#d0433e"/><rect x="2473.700" y="1593.700" width="27.300" height="27" rx="3.500" fill="#f6e67e" stroke="#e5c558" stroke-width="1.500"/><rect x="2479.300" y="1599.700" width="17" height="15.600" fill="#fbf3c2" stroke="#4d4a3a" stroke-width="1.300"/><path d="M2481.5 1603.2H2494.2" stroke="#5a5540" stroke-width="1.1"/><path d="M2481.5 1606.3H2494.2" stroke="#5a5540" stroke-width="1.1"/><path d="M2481.5 1609.4H2494.2" stroke="#5a5540" stroke-width="1.1"/><path d="M2481.5 1612.5H2494.2" stroke="#5a5540" stroke-width="1.1"/><path d="M2507.500 1601.500c3-1.500 5.500-1.200 8 .8c2.500-2 5-2.300 8-.8v13c-3-1.300-5.500-1-8 .800c-2.500-1.800-5-2.100-8-.800z" fill="#f7f7f7" stroke="#6a6a6a" stroke-width="1.200"/><path d="M2515.500 1602.300v15.500" stroke="#6a6a6a" stroke-width="1.200"/><path d="M2509.500 1605h4M2509.500 1608h4M2509.500 1611h4M2517.500 1605h4M2517.500 1608h4M2517.500 1611h4" stroke="#8a8a8a" stroke-width=".9"/><rect x="2533.200" y="1599.700" width="14.500" height="13.500" fill="#f7f7f7" stroke="#6a6a6a" stroke-width="1.200"/><path d="M2535.500 1603h10M2535.500 1606h10M2535.500 1609h6" stroke="#8a8a8a" stroke-width="1"/><circle cx="2546" cy="1612.500" r="4.600" fill="#2e9aa6" stroke="#1f6f7a" stroke-width=".8"/><path d="M2543.500 1610.500c1.500-1.500 3.500-1.500 5 0" stroke="#bfe8ec" stroke-width="1" fill="none"/><path d="M2566 1600.5H2576.4" stroke="#666" stroke-width="1.3"/><path d="M2568.5 1604H2576.4" stroke="#666" stroke-width="1.3"/><path d="M2568.5 1607.5H2576.4" stroke="#666" stroke-width="1.3"/><path d="M2566 1611H2576.4" stroke="#666" stroke-width="1.3"/><path d="M2568.5 1614.5H2576.4" stroke="#666" stroke-width="1.3"/><path d="M2563 1600v15" stroke="#888" stroke-width="1" stroke-dasharray="1.500 1.500"/><path d="M2589 1601H2605.4" stroke="#555" stroke-width="1.4"/><path d="M2589 1604.3H2605.4" stroke="#555" stroke-width="1.4"/><path d="M2589 1607.6H2605.4" stroke="#555" stroke-width="1.4"/><path d="M2589 1610.9H2605.4" stroke="#555" stroke-width="1.4"/><path d="M2589 1614.2H2605.4" stroke="#555" stroke-width="1.4"/><path d="M2707 1606.300H2857" stroke="#c4c6c8" stroke-width="1.300"/><path d="M2707 1607.500H2857" stroke="#f8f8f8" stroke-width="1"/><circle cx="2694.8" cy="1606.300" r="11.600" fill="#f7f8f8" stroke="#b3b5b7" stroke-width="1.300"/><circle cx="2868.2" cy="1606.300" r="11.600" fill="#f7f8f8" stroke="#b3b5b7" stroke-width="1.300"/><path d="M2688.800 1606.300h12" stroke="#555" stroke-width="3"/><path d="M2862.200 1606.300h12M2868.200 1600.300v12" stroke="#555" stroke-width="3"/><path d="M2775.500 1596.500h13.500v12l-6.750 7l-6.750-7z" fill="#f9f9f9" stroke="#9c9ea0" stroke-width="1.200" stroke-linejoin="round"/><path d="M2867 215H2880.600" stroke="#8f9296" stroke-width="2.600"/><rect x="2865" y="223.500" width="16.500" height="15.500" fill="#f4f6f8" stroke="#8a8e93" stroke-width="1.200"/><path d="M2868 226.500v4M2871 226.500v2.500M2874 226.500v4M2877 226.500v2.500M2868 236v-3M2874 236v-3" stroke="#777" stroke-width="1"/><path d="M2870.500 231l3 4l4-5.500" fill="none" stroke="#888" stroke-width="1.300"/><path d="M2862 244.600H2888" stroke="#cdd3d8" stroke-width="1"/><path d="M2867 261.700h13.600l-6.800-7.400z" fill="#a3a6aa"/><path d="M2867.500 1496.800h13l-6.500 7.200z" fill="#a3a6aa"/><path d="M2862 1511H2888" stroke="#cdd3d8" stroke-width="1"/><path d="M2869.800 1524.800h8.400l-4.200-4.200zM2869.800 1529.200h8.400l-4.200-4.200z" fill="#3c3c3c"/><circle cx="2873.900" cy="1550.700" r="4.800" fill="#f4f6f8" stroke="#8a8d91" stroke-width="1.500"/><path d="M2869.800 1572.400h8.400l-4.200 4.200zM2869.800 1576.800h8.400l-4.200 4.200z" fill="#3c3c3c"/></svg>
<div style="left:2.8px;top:1613px;width:7.4px;height:12px;background:#0a0608;"></div>
<span class="t" style="left:40.8px;top:1580.30px;font-family:'Liberation Sans', sans-serif;font-size:16px;line-height:16px;font-weight:700;color:#d12a63;letter-spacing:-0.435px;text-shadow:0 0 2px #fff,0 0 2px #fff;">laurencopeland.com</span>
</div></body></html>
